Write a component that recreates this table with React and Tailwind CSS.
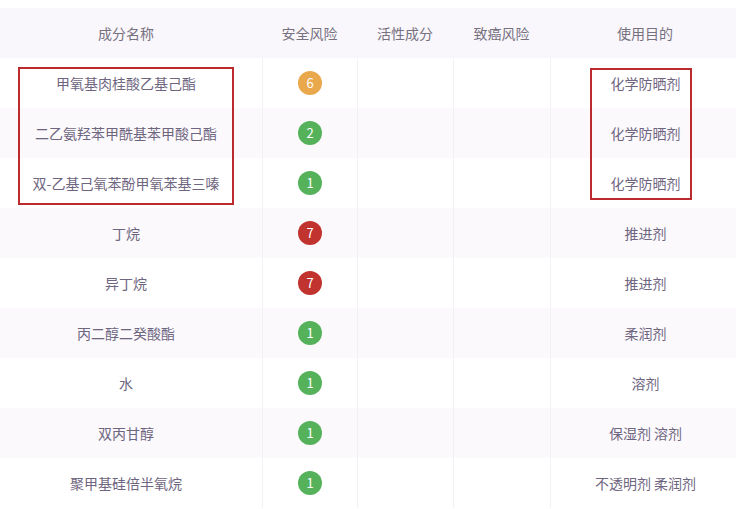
import React from "react";

const rows = [
  { name: "甲氧基肉桂酸乙基己酯", score: 6, use: "化学防晒剂" },
  { name: "二乙氨羟苯甲酰基苯甲酸己酯", score: 2, use: "化学防晒剂" },
  { name: "双-乙基己氧苯酚甲氧苯基三嗪", score: 1, use: "化学防晒剂" },
  { name: "丁烷", score: 7, use: "推进剂" },
  { name: "异丁烷", score: 7, use: "推进剂" },
  { name: "丙二醇二癸酸酯", score: 1, use: "柔润剂" },
  { name: "水", score: 1, use: "溶剂" },
  { name: "双丙甘醇", score: 1, use: "保湿剂 溶剂" },
  { name: "聚甲基硅倍半氧烷", score: 1, use: "不透明剂 柔润剂" },
];

function Badge({ n }) {
  const color =
    n >= 7 ? "bg-[#c0332f]" : n >= 3 ? "bg-[#e9a84c]" : "bg-[#55b25a]";
  return (
    <span
      className={`flex h-[24px] w-[24px] items-center justify-center rounded-full text-[13px] text-white ${color}`}
    >
      {n}
    </span>
  );
}

export default function App() {
  return (
    <div
      className="relative h-[509px] w-[736px] overflow-hidden bg-white text-[14px] text-[#6e6580]"
      style={{ fontFamily: '"Noto Sans CJK SC", "Noto Sans", sans-serif' }}
    >
      <div className="pt-[8px]">
        <div className="flex h-[50px] items-center bg-[#f9f7fb] text-[#76707f]">
          <div className="flex w-[262px] justify-center pr-[10px]">成分名称</div>
          <div className="flex w-[95px] justify-center">安全风险</div>
          <div className="flex w-[96px] justify-center">活性成分</div>
          <div className="flex w-[97px] justify-center">致癌风险</div>
          <div className="flex w-[186px] justify-center pl-[4px]">使用目的</div>
        </div>
        {rows.map((r, i) => (
          <div
            key={i}
            className={`flex h-[50px] items-stretch ${i % 2 === 1 ? "bg-[#fbf9fc]" : "bg-white"}`}
          >
            <div className="flex w-[262px] items-center justify-center pr-[10px]">
              {r.name}
            </div>
            <div className="flex w-[95px] items-center justify-center border-l border-[#f4f1f6]">
              <Badge n={r.score} />
            </div>
            <div className="w-[96px] border-l border-[#f4f1f6]" />
            <div className="w-[97px] border-l border-[#f4f1f6]" />
            <div className="flex w-[186px] items-center justify-center border-l border-[#f4f1f6] pl-[4px]">
              {r.use}
            </div>
          </div>
        ))}
      </div>
      <div className="absolute left-[18px] top-[67px] h-[138px] w-[216px] border-2 border-[#bd2a2e]" />
      <div className="absolute left-[590px] top-[68px] h-[132px] w-[102px] border-2 border-[#bd2a2e]" />
    </div>
  );
}
